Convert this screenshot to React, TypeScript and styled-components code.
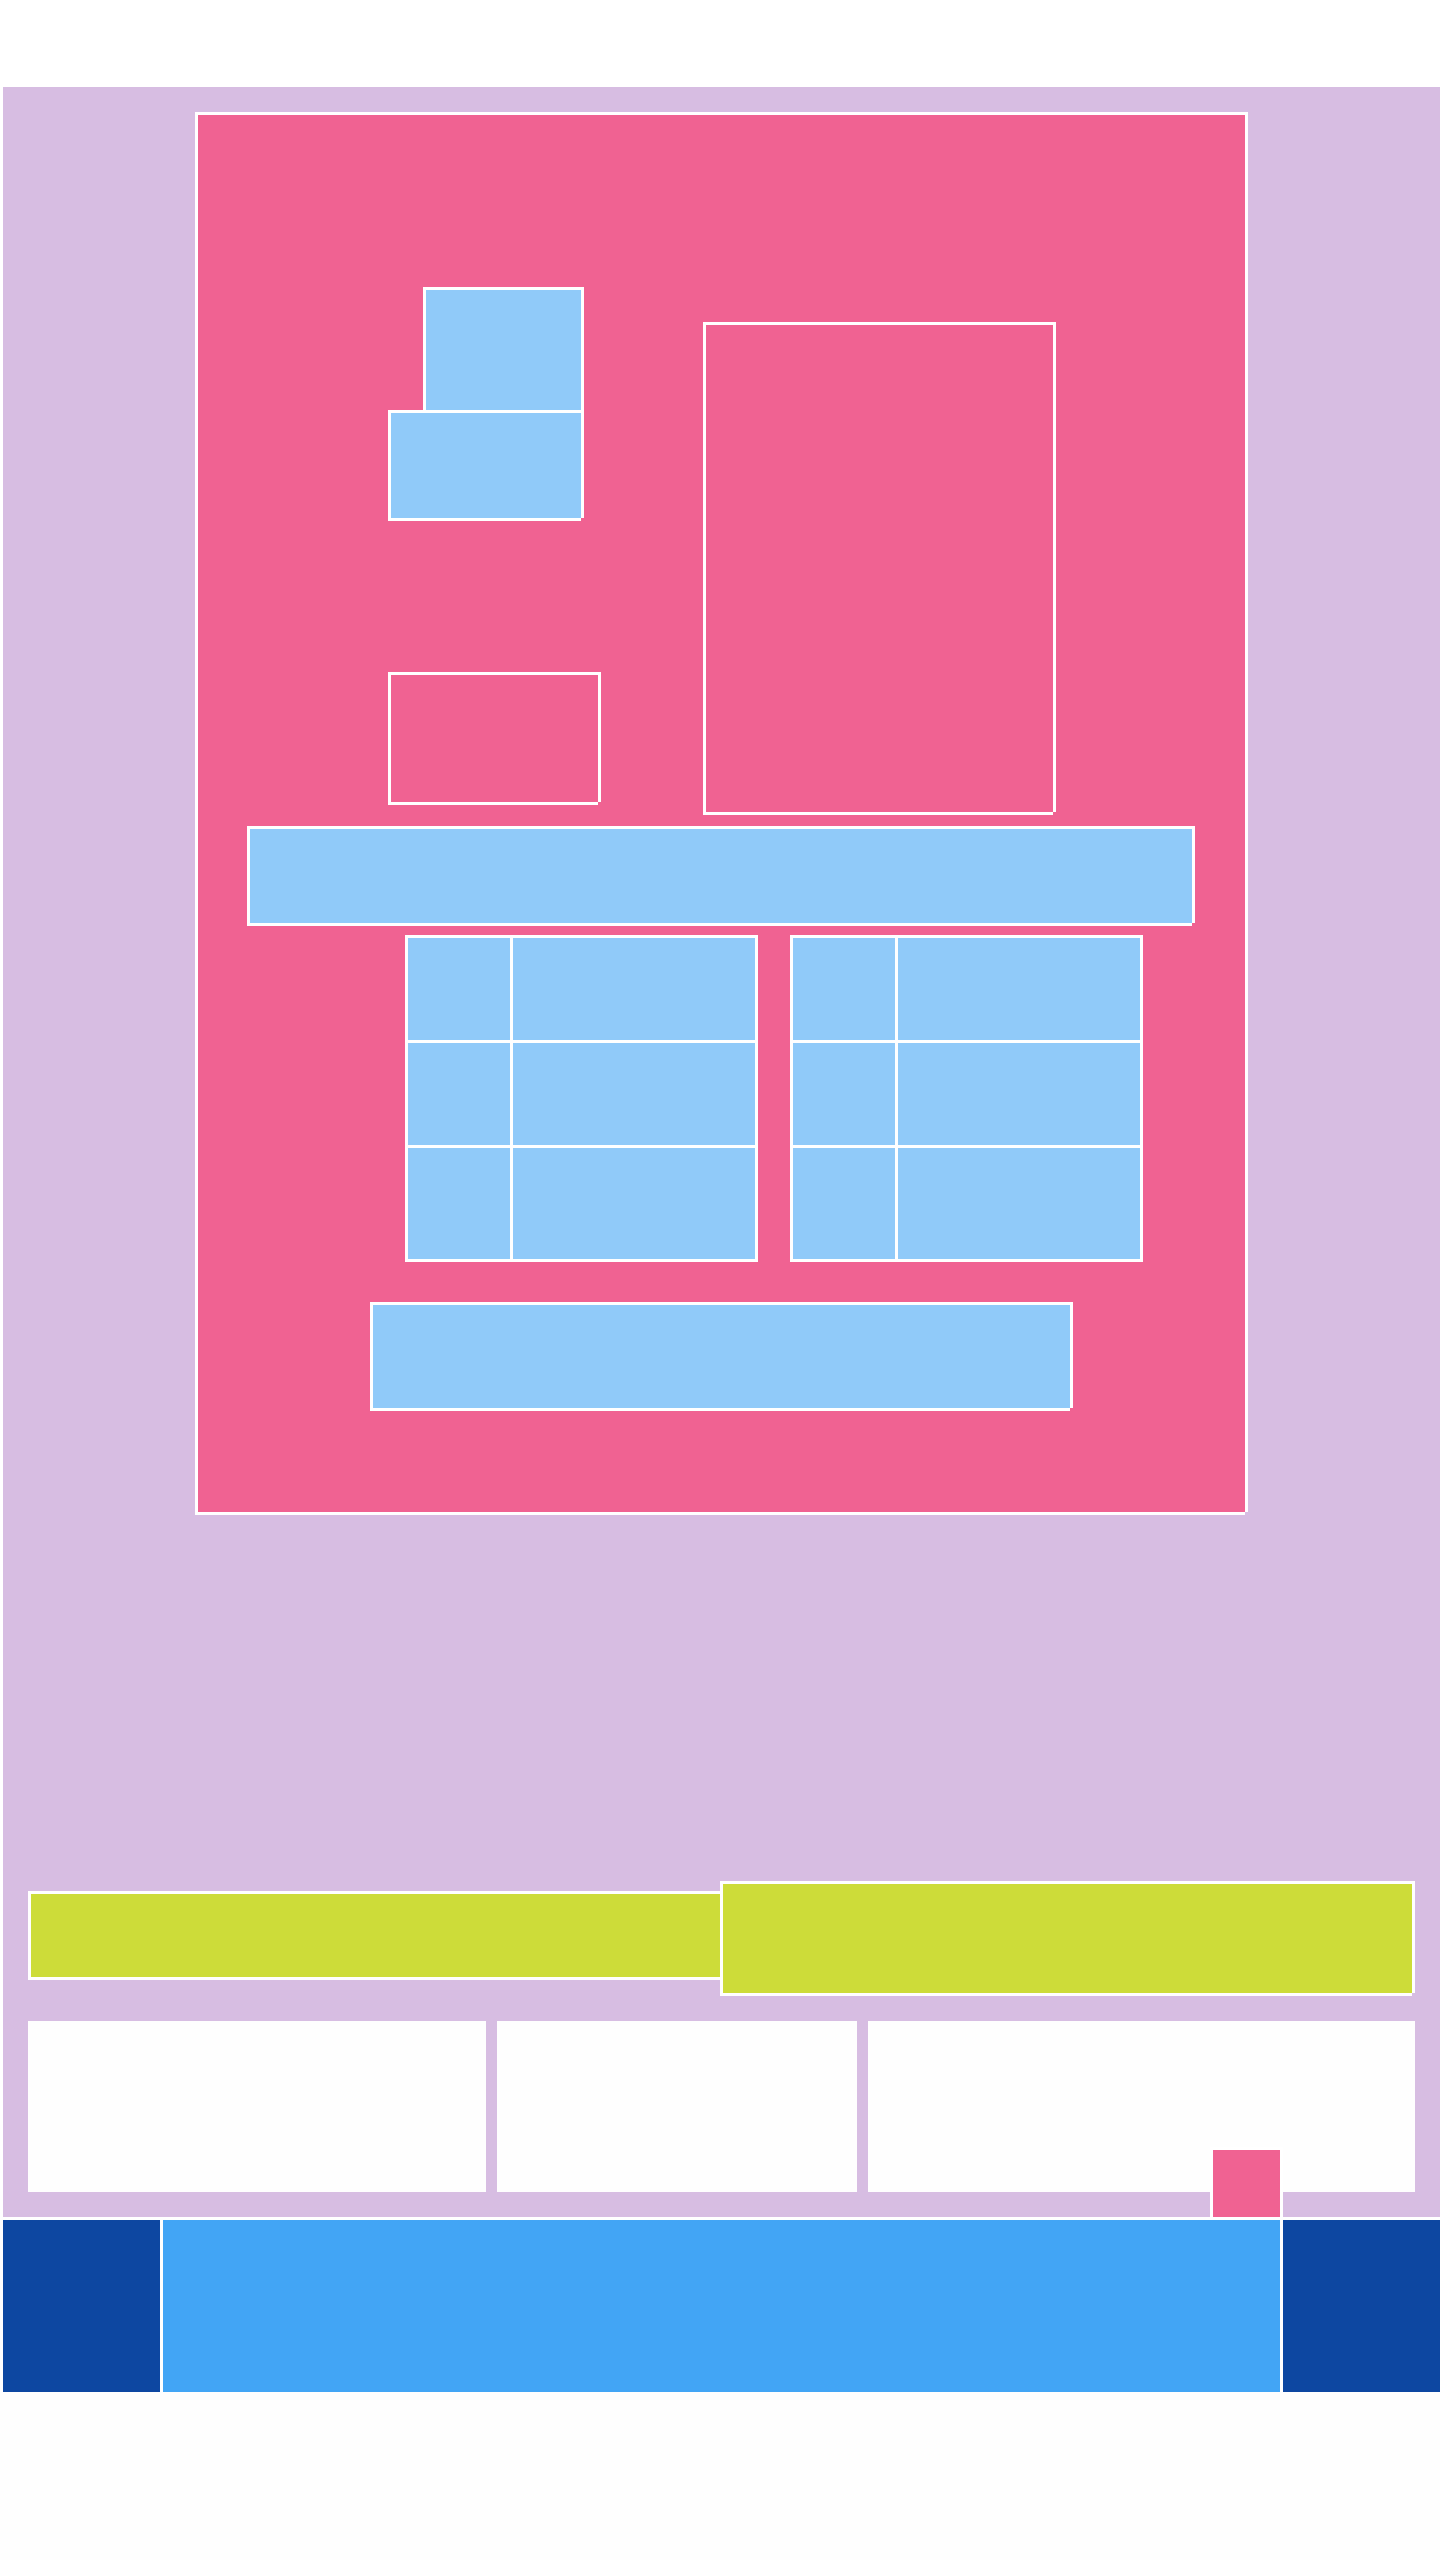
import React from "react";
import styled, { createGlobalStyle } from "styled-components";

const WHITE = "#ffffff";
const PAPER = "#fefefe";
const LAVENDER = "#D7BDE2";
const PINK = "#F06292";
const SKY = "#90CAF9";
const LIME = "#CDDC39";
const BLUE = "#42A5F5";
const NAVY = "#0D47A1";

const GlobalStyle = createGlobalStyle`
  html, body {
    margin: 0;
    padding: 0;
    background: ${WHITE};
  }
  body {
    font-family: "Liberation Sans", Arial, sans-serif;
  }
  *, *::before, *::after {
    box-sizing: border-box;
  }
`;

const Page = styled.div`
  width: 1440px;
  display: flex;
  flex-direction: column;
`;

const Header = styled.header`
  height: 84px;
  background: ${WHITE};
`;

const Main = styled.main`
  position: relative;
  background: ${LAVENDER};
  border-top: 3px solid ${WHITE};
  border-left: 3px solid ${WHITE};
  border-bottom: 3px solid ${WHITE};
  padding: 25px;
  display: flex;
  flex-direction: column;
`;

const Frame = styled.section`
  position: relative;
  width: 1053px;
  margin-left: 167px;
  background: ${PINK};
  border: 3px solid ${WHITE};
  padding-bottom: 101px;
  display: flex;
  flex-direction: column;
`;

const Notch = styled.span<{ $bg: string }>`
  position: absolute;
  right: -3px;
  bottom: -3px;
  width: 3px;
  height: 3px;
  background: ${(p) => p.$bg};
`;

const TopArea = styled.div`
  display: flex;
  align-items: flex-start;
  padding-left: 190px;
  height: 700px;
`;

const LeftStack = styled.div`
  width: 213px;
  display: flex;
  flex-direction: column;
  align-items: flex-start;
`;

const Tile = styled.div<{ $w: number; $h: number; $filled?: boolean }>`
  position: relative;
  width: ${(p) => p.$w}px;
  height: ${(p) => p.$h}px;
  flex: none;
  background: ${(p) => (p.$filled ? SKY : "transparent")};
  border: 3px solid ${WHITE};
`;

const UpperTile = styled(Tile)`
  margin-top: 172px;
  margin-left: 35px;
`;

const LowerTile = styled(Tile)`
  margin-top: -3px;
`;

const OutlineTile = styled(Tile)`
  margin-top: 151px;
`;

const TallTile = styled(Tile)`
  margin-top: 207px;
  margin-left: 102px;
`;

const WideBar = styled(Tile)`
  margin-top: 11px;
  margin-left: 49px;
`;

const TablesRow = styled.div`
  display: flex;
  gap: 32px;
  margin-top: 9px;
  padding-left: 207px;
`;

const Table = styled.div`
  position: relative;
  display: grid;
  grid-template-columns: 102px 242px;
  grid-template-rows: 102px 102px 111px;
  gap: 3px;
  padding: 3px;
  background: ${WHITE};
`;

const Cell = styled.div`
  background: ${SKY};
`;

const BottomBar = styled(Tile)`
  margin-top: 40px;
  margin-left: 172px;
`;

const BannerRow = styled.div`
  display: flex;
  align-items: flex-start;
  margin-top: 366px;
  height: 115px;
`;

const Banner = styled.div<{ $h: number; $offset: number; $overlap?: boolean }>`
  position: relative;
  width: 695px;
  height: ${(p) => p.$h}px;
  margin-top: ${(p) => p.$offset}px;
  margin-left: ${(p) => (p.$overlap ? -3 : 0)}px;
  background: ${LIME};
  border: 3px solid ${WHITE};
`;

const CardRow = styled.div`
  display: flex;
  gap: 11px;
  margin-top: 25px;
  height: 171px;
`;

const Card = styled.div<{ $w: number }>`
  position: relative;
  width: ${(p) => p.$w}px;
  flex: none;
  background: ${PAPER};
`;

const Badge = styled.div`
  position: absolute;
  right: 157px;
  bottom: -3px;
  width: 73px;
  height: 73px;
  background: ${PINK};
  border: 3px solid ${WHITE};
`;

const Footer = styled.footer`
  display: grid;
  grid-template-columns: 157px 1fr 157px;
  gap: 3px;
  padding-left: 3px;
  height: 172px;
  background: ${WHITE};
`;

const FooterBlock = styled.div<{ $bg: string }>`
  background: ${(p) => p.$bg};
`;

const Tail = styled.div`
  height: 168px;
  background: ${PAPER};
`;

const cells = Array.from({ length: 6 }, (_, i) => i);

export default function App() {
  return (
    <>
      <GlobalStyle />
      <Page>
        <Header />
        <Main>
          <Frame>
            <TopArea>
              <LeftStack>
                <UpperTile $w={161} $h={126} $filled>
                  <Notch $bg={PINK} />
                </UpperTile>
                <LowerTile $w={196} $h={111} $filled>
                  <Notch $bg={PINK} />
                </LowerTile>
                <OutlineTile $w={213} $h={133}>
                  <Notch $bg={PINK} />
                </OutlineTile>
              </LeftStack>
              <TallTile $w={353} $h={493}>
                <Notch $bg={PINK} />
              </TallTile>
            </TopArea>
            <WideBar $w={948} $h={100} $filled>
              <Notch $bg={PINK} />
            </WideBar>
            <TablesRow>
              {[0, 1].map((t) => (
                <Table key={t}>
                  {cells.map((c) => (
                    <Cell key={c} />
                  ))}
                  <Notch $bg={PINK} />
                </Table>
              ))}
            </TablesRow>
            <BottomBar $w={703} $h={109} $filled>
              <Notch $bg={PINK} />
            </BottomBar>
            <Notch $bg={LAVENDER} />
          </Frame>

          <BannerRow>
            <Banner $h={89} $offset={10} />
            <Banner $h={115} $offset={0} $overlap>
              <Notch $bg={LAVENDER} />
            </Banner>
          </BannerRow>

          <CardRow>
            <Card $w={458}>
              <Notch $bg={LAVENDER} />
            </Card>
            <Card $w={360}>
              <Notch $bg={LAVENDER} />
            </Card>
            <Card $w={547}>
              <Notch $bg={LAVENDER} />
            </Card>
          </CardRow>

          <Badge />
        </Main>
        <Footer>
          <FooterBlock $bg={NAVY} />
          <FooterBlock $bg={BLUE} />
          <FooterBlock $bg={NAVY} />
        </Footer>
        <Tail />
      </Page>
    </>
  );
}
